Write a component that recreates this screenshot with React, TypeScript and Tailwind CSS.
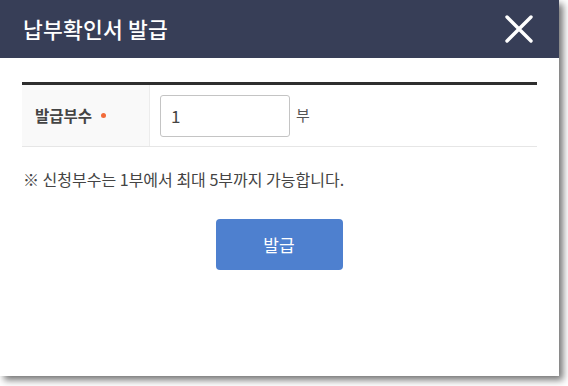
import { type FC } from "react";

const CloseIcon: FC = () => (
  <svg width="30" height="30" viewBox="0 0 30 30" fill="none">
    <path
      d="M3 3 L27 27 M27 3 L3 27"
      stroke="#ffffff"
      strokeWidth="3.4"
      strokeLinecap="round"
    />
  </svg>
);

const App: FC = () => {
  return (
    <div className="h-[386px] w-[568px] bg-white font-['Noto_Sans_CJK_KR',sans-serif]">
      <div className="flex h-[376px] w-[559px] flex-col bg-white shadow-[4px_4px_7px_rgba(0,0,0,0.55)]">
        <div className="flex h-[58px] items-center justify-between bg-[#373e57] pl-[23px] pr-[25px]">
          <h1 className="text-[21.5px] font-medium tracking-[0.2px] text-white">
            납부확인서 발급
          </h1>
          <CloseIcon />
        </div>

        <div className="px-[22px] pt-[24px]">
          <div className="border-t-[3px] border-b border-t-[#2e2e2e] border-b-[#e6e6e6]">
            <div className="flex h-[61px]">
              <div className="flex w-[128px] items-center border-r border-[#ececec] bg-[#f9f9f9] pl-[13px]">
                <span className="text-[15.5px] font-bold text-[#444]">발급부수</span>
                <span className="ml-[9px] h-[5px] w-[5px] rounded-full bg-[#f26b3a]" />
              </div>
              <div className="flex items-center pl-[10px]">
                <input
                  defaultValue="1"
                  className="h-[42px] w-[130px] rounded-[3px] border border-[#c4c4c4] px-[10px] text-[17px] text-[#444] outline-none"
                />
                <span className="ml-[6px] text-[15px] text-[#555]">부</span>
              </div>
            </div>
          </div>

          <p className="mt-[20px] pl-px text-[16px] text-[#444]">
            ※ 신청부수는 1부에서 최대 5부까지 가능합니다.
          </p>

          <div className="mt-[28px] flex justify-center pr-[1px]">
            <button className="h-[51px] w-[127px] rounded-[4px] bg-[#4e80cf] text-[17px] text-white">
              발급
            </button>
          </div>
        </div>
      </div>
    </div>
  );
};

export default App;
